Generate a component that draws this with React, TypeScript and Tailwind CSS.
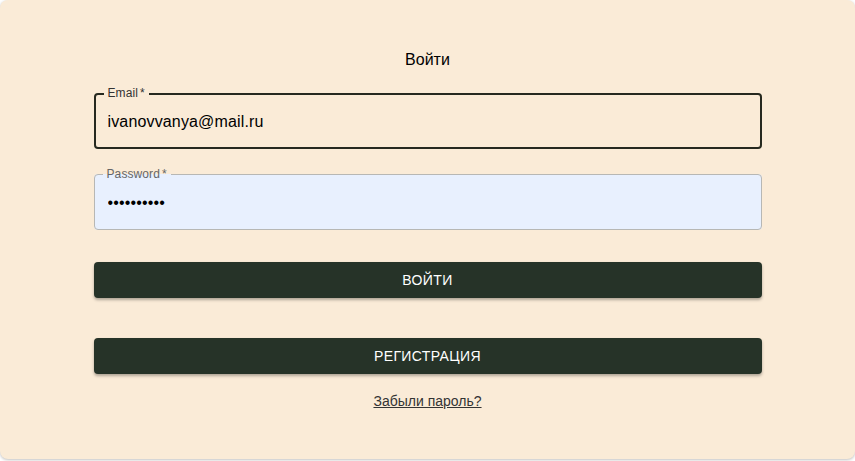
import React from 'react';

const Field: React.FC<{
  label: string;
  type: string;
  value: string;
  focused?: boolean;
}> = ({ label, type, value, focused }) => {
  return (
    <div className="relative h-[56px] w-full">
      <input
        type={type}
        value={value}
        readOnly
        className={`h-full w-full rounded-[4px] px-[14px] pt-[1px] text-[16px] tracking-[0.15px] text-black outline-none ${
          focused ? 'bg-transparent' : 'bg-[#e8f0fe]'
        }`}
        style={{ fontFamily: '"Liberation Sans", Arial, sans-serif' }}
      />
      <fieldset
        className={`pointer-events-none absolute inset-x-0 bottom-0 top-[-5px] m-0 rounded-[4px] px-[8px] ${
          focused ? 'border-2 border-[#26291f]' : 'border border-[#b7b7b4]'
        }`}
      >
        <legend
          className={`px-[4px] text-[12px] leading-[11px] tracking-[0.1px] ${
            focused ? 'text-[#333]' : 'text-[#666]'
          }`}
        >
          {label}
          <span className="ml-[2px]">*</span>
        </legend>
      </fieldset>
    </div>
  );
};

export default function App() {
  return (
    <div
      className="h-[461px] w-[855px] bg-white"
      style={{ fontFamily: '"Liberation Sans", Arial, sans-serif' }}
    >
      <div className="flex h-[459px] w-[855px] flex-col items-center rounded-[8px] bg-[#faebd7] pt-[50px] shadow-[0_1px_3px_rgba(0,0,0,0.25)]">
        <h1 className="text-[16px] leading-[19px] text-black">Войти</h1>
        <div className="flex w-[668px] flex-col">
          <div className="mt-[24px]">
            <Field label="Email" type="text" value="ivanovvanya@mail.ru" focused />
          </div>
          <div className="mt-[25px]">
            <Field label="Password" type="password" value="1234567890" />
          </div>
          <button className="mt-[32px] h-[36px] w-full rounded-[4px] bg-[#263328] text-[14px] font-medium uppercase tracking-[0.4px] text-white shadow-[0_2px_3px_rgba(0,0,0,0.3)]">
            Войти
          </button>
          <button className="mt-[40px] h-[36px] w-full rounded-[4px] bg-[#263328] text-[14px] font-medium uppercase tracking-[0.4px] text-white shadow-[0_2px_3px_rgba(0,0,0,0.3)]">
            Регистрация
          </button>
        </div>
        <a
          href="#"
          className="mt-[19px] text-[14px] leading-[16px] text-[#333] underline"
        >
          Забыли пароль?
        </a>
      </div>
    </div>
  );
}
